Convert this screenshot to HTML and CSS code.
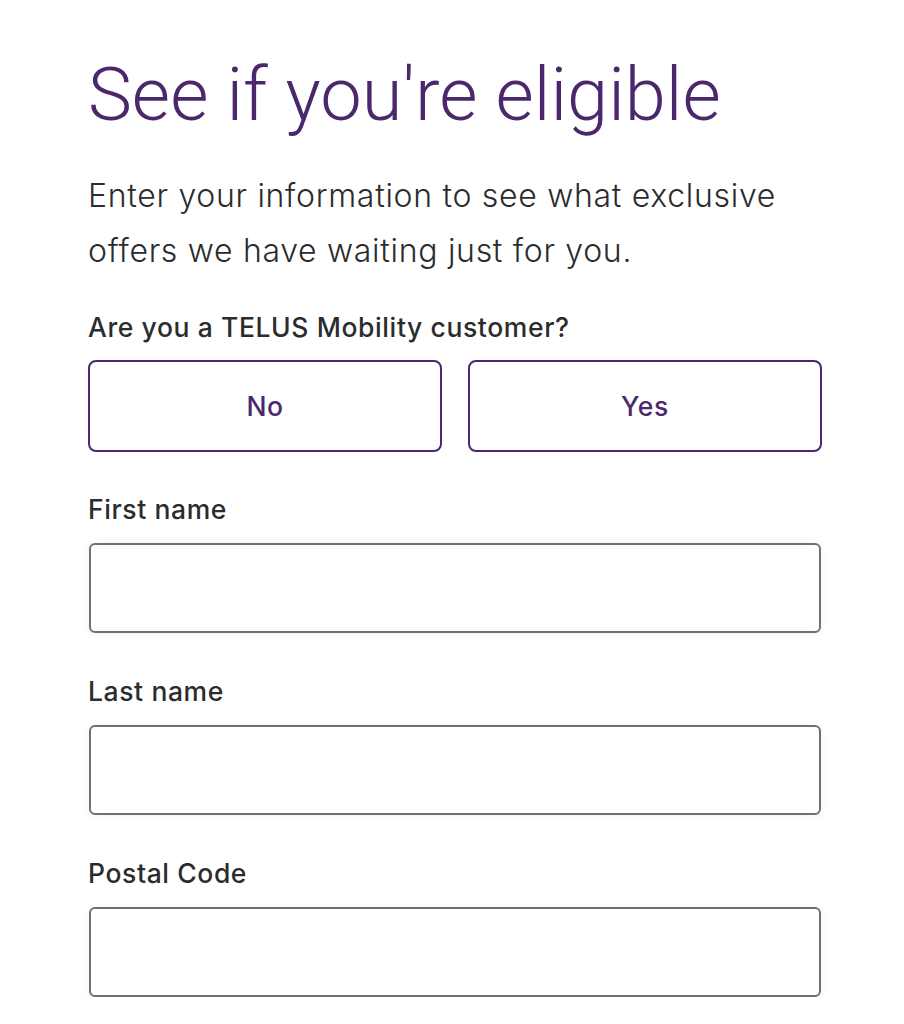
FILE: index.html
```html
<!DOCTYPE html>
<html lang="en">
<head>
  <meta charset="UTF-8">
  <title>See if you're eligible</title>
  <link rel="stylesheet" href="styles.css">
</head>
<body>
  <div class="page">
    <h1>See if you're eligible</h1>
    <p class="intro">Enter your information to see what exclusive offers we have waiting just for you.</p>

    <form id="eligibility-form">
      <div class="label">Are you a TELUS Mobility customer?</div>
      <div class="choice">
        <button type="button">No</button>
        <button type="button">Yes</button>
      </div>

      <div class="field">
        <label for="first-name">First name</label>
        <input id="first-name" type="text">
      </div>

      <div class="field">
        <label for="last-name">Last name</label>
        <input id="last-name" type="text">
      </div>

      <div class="field">
        <label for="postal-code">Postal Code</label>
        <input id="postal-code" type="text">
      </div>
    </form>
  </div>
</body>
</html>
```

FILE: styles.css
```css
body {
  margin: 0;
  background: #fff;
  color: #2a2c2e;
  font-family: Inter, "Liberation Sans", sans-serif;
}

.page {
  padding: 0 82px 0 88px;
}

h1 {
  margin: 55px 0 0;
  font-family: Roboto, "Liberation Sans", sans-serif;
  font-size: 74px;
  line-height: 80px;
  font-weight: 300;
  color: #4b286d;
}

.intro {
  margin: 33px 0 0;
  max-width: 720px;
  font-size: 32px;
  line-height: 55px;
  font-weight: 300;
  letter-spacing: 0.7px;
}

form {
  margin-top: 33px;
}

.label, label {
  display: block;
  font-size: 26.5px;
  line-height: 32px;
  font-weight: 500;
  letter-spacing: 0.6px;
  color: #2a2c2e;
}

.choice {
  display: grid;
  grid-template-columns: 1fr 1fr;
  gap: 26px;
  margin-top: 17px;
}

.choice button {
  height: 92px;
  background: #fff;
  border: 2px solid #4b286d;
  border-radius: 8px;
  color: #4b286d;
  font-family: inherit;
  font-size: 26.5px;
  font-weight: 500;
  letter-spacing: 0.6px;
  cursor: pointer;
}

.field {
  margin-top: 41px;
}

.field + .field {
  margin-top: 42px;
}

.field input {
  display: block;
  box-sizing: border-box;
  width: 732px;
  height: 90px;
  margin: 18px 0 0 1px;
  border: 2px solid #6d7176;
  border-radius: 6px;
  background: #fff;
  box-shadow: 0 1px 8px rgba(0,0,0,0.06);
  font-size: 26px;
  padding: 0 20px;
}
```
